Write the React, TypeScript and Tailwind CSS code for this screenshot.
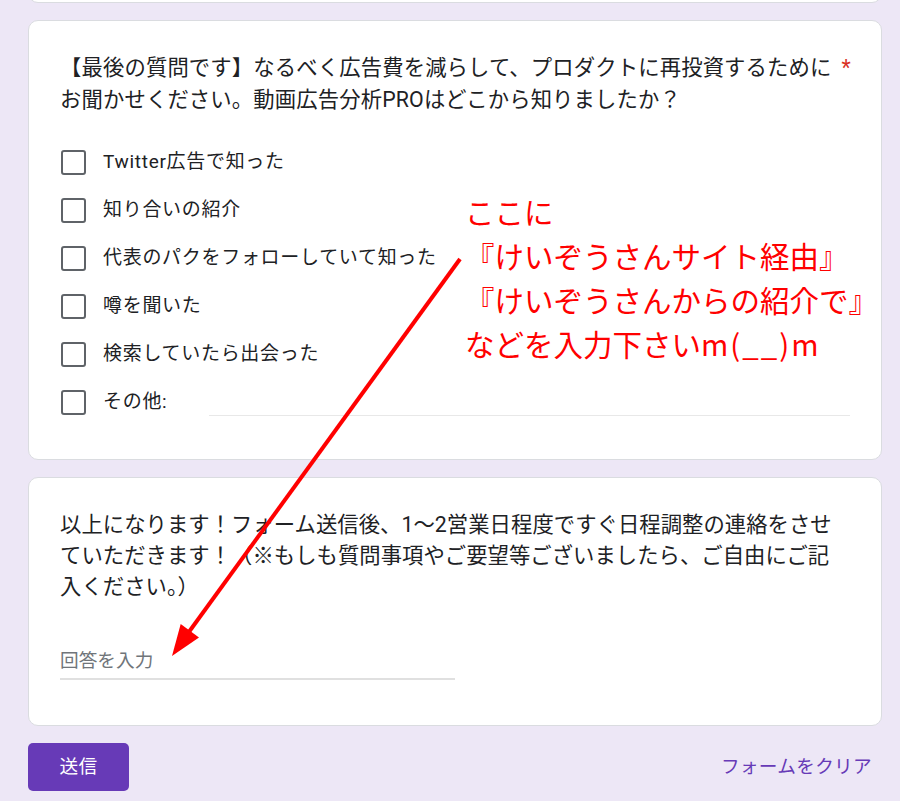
import React from "react";

const OPTIONS = [
  "Twitter広告で知った",
  "知り合いの紹介",
  "代表のパクをフォローしていて知った",
  "噂を聞いた",
  "検索していたら出会った",
];

const FONT = "font-['Roboto','Noto_Sans_CJK_JP',sans-serif]";

function Checkbox() {
  return <div className="w-[25px] h-[25px] shrink-0 rounded-[3px] border-[2.5px] border-[#5f6368]" />;
}

function OptionRow({ label }: { label: string }) {
  return (
    <div className="flex items-center h-[48px] pl-[1px]">
      <Checkbox />
      <span className="ml-[17px] text-[19px] text-[#202124] tracking-[0.7px]">{label}</span>
    </div>
  );
}

export default function App() {
  return (
    <div className={`relative w-full min-h-[801px] bg-[#ede7f6] overflow-hidden ${FONT}`}>
      <div className="flex flex-col gap-[17px] pl-[28px] pr-[18px] -mt-[40px]">
        {/* previous question, scrolled off */}
        <div className="h-[43px] bg-white rounded-[10px] border border-[#dadce0]" />

        {/* last question */}
        <div className="bg-white rounded-[10px] border border-[#dadce0] px-[31px] pt-[31px] pb-[33px]">
          <div className="text-[21.33px] leading-[32px] text-[#202124] tracking-[0.15px] whitespace-nowrap">
            【最後の質問です】なるべく広告費を減らして、プロダクトに再投資するために
            <span className="text-[#d93025] ml-[10px]">*</span>
            <br />
            お聞かせください。動画広告分析PROはどこから知りましたか？
          </div>
          <div className="mt-[22px] flex flex-col">
            {OPTIONS.map((o) => (
              <OptionRow key={o} label={o} />
            ))}
            <div className="flex items-center h-[48px] pl-[1px]">
              <Checkbox />
              <span className="ml-[17px] text-[19px] text-[#202124] tracking-[0.7px]">その他:</span>
              <div className="ml-[42px] flex-1 h-[1px] bg-[#e8e8e8] mt-[26px]" />
            </div>
          </div>
        </div>

        {/* closing note */}
        <div className="bg-white rounded-[10px] border border-[#dadce0] px-[31px] pt-[31px] pb-[32px]">
          <div className="text-[21.33px] leading-[31px] text-[#202124] tracking-[0.05px] whitespace-nowrap">
            以上になります！フォーム送信後、1〜2営業日程度ですぐ日程調整の連絡をさせ
            <br />
            ていただきます！（※もしも質問事項やご要望等ございましたら、ご自由にご記
            <br />
            入ください。）
          </div>
          <div className="mt-[42px] mb-[13px] w-[395px] h-[36px] border-b-[2px] border-[#e0e0e0] flex items-center">
            <span className="text-[18.67px] text-[#70757a]">回答を入力</span>
          </div>
        </div>

        <div className="flex items-center justify-between">
          <button className="w-[101px] h-[48px] rounded-[5px] bg-[#673ab7] text-white text-[18.67px] tracking-[0.3px]">
            送信
          </button>
          <span className="pr-[10px] text-[18.67px] text-[#673ab7] tracking-[0.3px]">フォームをクリア</span>
        </div>
      </div>

      {/* red annotation */}
      <div className="absolute left-[465px] top-[189px] text-[29.5px] leading-[44px] text-[#ff0000] font-['Noto_Sans_CJK_JP',sans-serif] whitespace-nowrap">
        ここに
        <br />
        『けいぞうさんサイト経由』
        <br />
        『けいぞうさんからの紹介で』
        <br />
        などを入力下さい<span className="tracking-[2px]">m(__)m</span>
      </div>
      <svg className="absolute left-0 top-0 pointer-events-none" width="900" height="801">
        <line x1="460" y1="259" x2="186" y2="636" stroke="#ff0000" strokeWidth="4" />
        <polygon points="172,656 180.7,624 199,637.5" fill="#ff0000" />
      </svg>
    </div>
  );
}
